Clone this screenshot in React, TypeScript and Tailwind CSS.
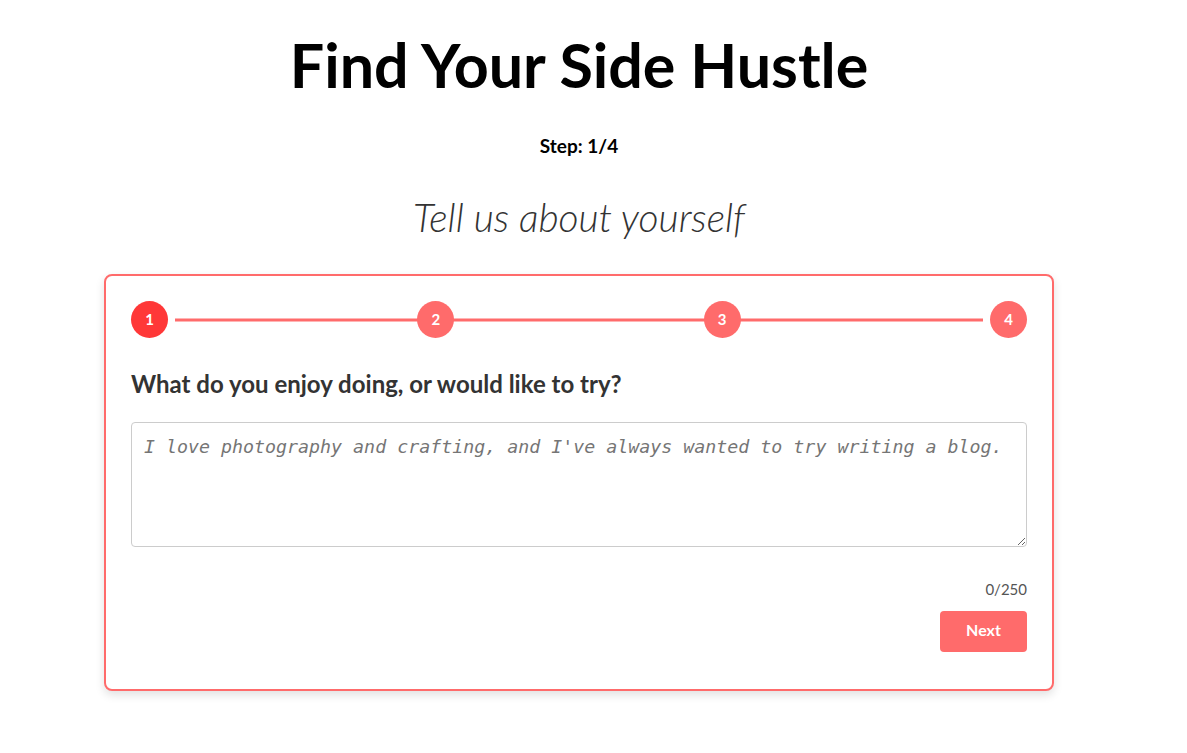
import React from "react";

export default function App() {
  const steps = [1, 2, 3, 4];
  return (
    <div className="min-h-screen bg-white pr-[29px] pt-[30px]" style={{ fontFamily: "Lato, 'Noto Sans', sans-serif" }}>
      <h1 className="text-center text-[61px] font-bold leading-[70px] text-black">Find Your Side Hustle</h1>
      <div className="mt-[34px] text-center text-[19px] font-bold leading-[24px] text-black">Step: 1/4</div>
      <h2 className="mt-[37px] text-center text-[39px] font-light italic leading-[44px] text-[#333]">Tell us about yourself</h2>
      <div className="mx-auto mt-[35px] w-[950px] rounded-[8px] border-2 border-[#ff6b6b] bg-white pb-[37px] pl-[25px] pr-[25px] pt-[25px] shadow-[0_4px_10px_rgba(0,0,0,0.12)]">
        <div className="relative flex items-center justify-between">
          <div className="absolute left-[44px] right-[44px] top-1/2 h-[3px] -translate-y-1/2 bg-[#ff6b6b]" />
          {steps.map((s) => (
            <div
              key={s}
              className={`relative z-10 flex h-[37px] w-[37px] items-center justify-center rounded-full text-[15px] font-bold text-white ${s === 1 ? "bg-[#ff3838]" : "bg-[#ff6b6b]"}`}
            >
              {s}
            </div>
          ))}
        </div>
        <div className="mt-[32px] text-[24px] font-bold leading-[28px] text-[#333]">What do you enjoy doing, or would like to try?</div>
        <textarea
          className="mt-[24px] block h-[125px] w-full rounded-[4px] border border-[#ccc] px-[12px] py-[12px] text-[18.3px] italic leading-[24px] text-[#333] placeholder:text-[#757575] focus:outline-none"
          style={{ fontFamily: "'DejaVu Sans Mono', monospace" }}
          placeholder="I love photography and crafting, and I've always wanted to try writing a blog."
        />
        <div className="mt-[33px] text-right text-[15px] leading-[18px] text-[#555]">0/250</div>
        <div className="mt-[13px] flex justify-end">
          <button className="h-[41px] w-[87px] rounded-[4px] bg-[#ff6b6b] pb-[3px] text-[16px] font-bold text-white">Next</button>
        </div>
      </div>
    </div>
  );
}
